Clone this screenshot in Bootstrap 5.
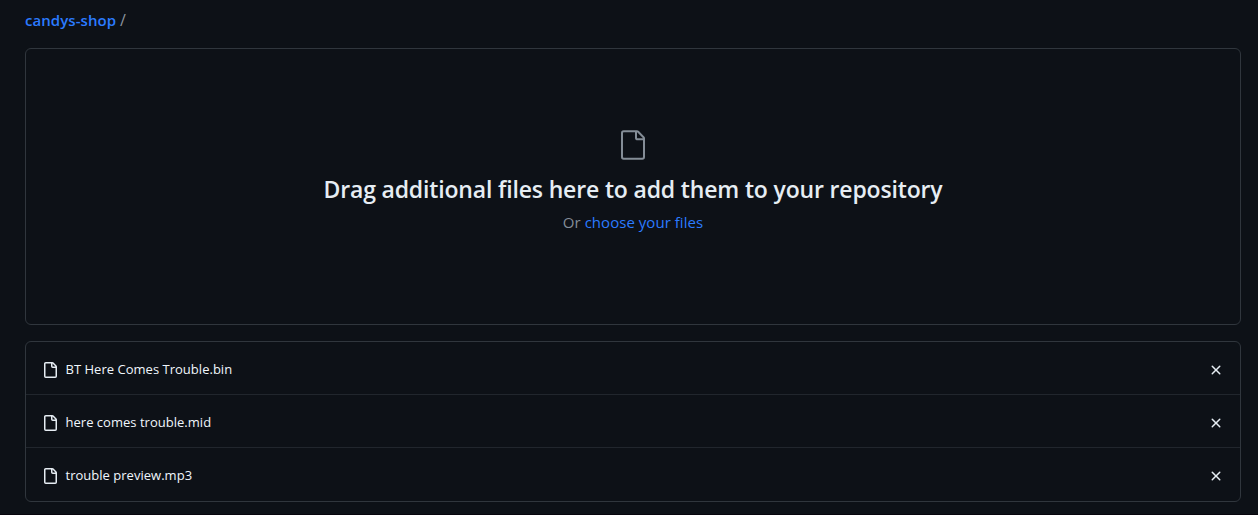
<!DOCTYPE html>
<html lang="en" data-bs-theme="dark">
<head>
<meta charset="utf-8">
<meta name="viewport" content="width=device-width, initial-scale=1">
<title>Upload files</title>
<link href="https://cdn.jsdelivr.net/npm/bootstrap@5.3.0/dist/css/bootstrap.min.css" rel="stylesheet">
<style>
html { background: #07050d; }
body { height: 514px; background: #0d1117; color: #f0f6fc; font-family: "Open Sans", "Noto Sans", sans-serif; font-size: 13px; overflow: hidden; }
.upload-page { padding: 8px 17px 0 25px; }
.crumbs { height: 24px; line-height: 24px; font-size: 15px; color: #8b949e; margin-bottom: 16px; }
.crumbs a { font-weight: 600; letter-spacing: .06px; }
.crumbs span { font-size: 16px; }
.accent { color: #2b7bff; }
.dropzone { height: 277px; border: 1px solid #30363d; border-radius: 6px; padding-top: 80px; color: #848d97; }
.dropzone svg { margin-bottom: 12px; }
.dropzone h1 { font-size: 23px; line-height: 32px; font-weight: 600; letter-spacing: -.16px; color: #e6edf3; margin: 0 0 5px; }
.dropzone p { font-size: 15px; line-height: 24px; letter-spacing: .04px; margin: 0; }
.files { border: 1px solid #30363d; border-radius: 6px; margin-top: 16px; height: 161px; }
.file-row { height: 52px; padding: 4px 16px 0; }
.file-row + .file-row { height: 53px; border-top: 1px solid #21262d; }
.file-row svg { fill: #e6edf3; }
.file-name { line-height: 20px; margin: -2px 0 0 -.5px; letter-spacing: .02px; }
.remove { background: none; border: 0; padding: 0; }
</style>
</head>
<body>
<svg class="d-none" aria-hidden="true">
  <symbol id="file" viewBox="0 0 16 16"><path d="M2 1.75C2 .784 2.784 0 3.75 0h6.586c.464 0 .909.184 1.237.513l2.914 2.914c.329.328.513.773.513 1.237v9.586A1.75 1.75 0 0 1 13.25 16h-9.5A1.75 1.75 0 0 1 2 14.25Zm1.75-.25a.25.25 0 0 0-.25.25v12.5c0 .138.112.25.25.25h9.5a.25.25 0 0 0 .25-.25V6h-2.75A1.75 1.75 0 0 1 9 4.25V1.5Zm6.75.062V4.25c0 .138.112.25.25.25h2.688l-.011-.013-2.914-2.914-.013-.011Z"/></symbol>
  <symbol id="x" viewBox="0 0 16 16"><path d="M3.72 3.72a.75.75 0 0 1 1.06 0L8 6.94l3.22-3.22a.75.75 0 1 1 1.06 1.06L9.06 8l3.22 3.22a.75.75 0 1 1-1.06 1.06L8 9.06l-3.22 3.22a.75.75 0 0 1-1.06-1.06L6.94 8 3.72 4.78a.75.75 0 0 1 0-1.06Z"/></symbol>
</svg>
<main class="upload-page">
  <div class="crumbs"><a class="accent text-decoration-none" href="#">candys-shop</a> <span>/</span></div>
  <section class="dropzone d-flex flex-column align-items-center text-center">
    <svg width="32" height="32" viewBox="0 0 24 24" fill="#848d97"><path d="M3 3a2 2 0 0 1 2-2h9.982a2 2 0 0 1 1.414.586l4.018 4.018A2 2 0 0 1 21 7.018V21a2 2 0 0 1-2 2H5a2 2 0 0 1-2-2V3zm2-.5a.5.5 0 0 0-.5.5v18a.5.5 0 0 0 .5.5h14a.5.5 0 0 0 .5-.5V8.5h-4a2 2 0 0 1-2-2v-4H5zm10 0v4a.5.5 0 0 0 .5.5h4a.5.5 0 0 0-.146-.336l-4.018-4.018A.5.5 0 0 0 15 2.5z"/></svg>
    <h1>Drag additional files here to add them to your repository</h1>
    <p>Or <a class="accent text-decoration-none" href="#">choose your files</a></p>
  </section>
  <section class="files">
    <div class="file-row d-flex align-items-center gap-2"><svg width="16" height="16"><use href="#file"/></svg><span class="file-name me-auto">BT Here Comes Trouble.bin</span><button class="remove d-flex" aria-label="Remove"><svg width="16" height="16"><use href="#x"/></svg></button></div>
    <div class="file-row d-flex align-items-center gap-2"><svg width="16" height="16"><use href="#file"/></svg><span class="file-name me-auto">here comes trouble.mid</span><button class="remove d-flex" aria-label="Remove"><svg width="16" height="16"><use href="#x"/></svg></button></div>
    <div class="file-row d-flex align-items-center gap-2"><svg width="16" height="16"><use href="#file"/></svg><span class="file-name me-auto">trouble preview.mp3</span><button class="remove d-flex" aria-label="Remove"><svg width="16" height="16"><use href="#x"/></svg></button></div>
  </section>
</main>
<script src="https://cdn.jsdelivr.net/npm/bootstrap@5.3.0/dist/js/bootstrap.bundle.min.js"></script>
</body>
</html>
